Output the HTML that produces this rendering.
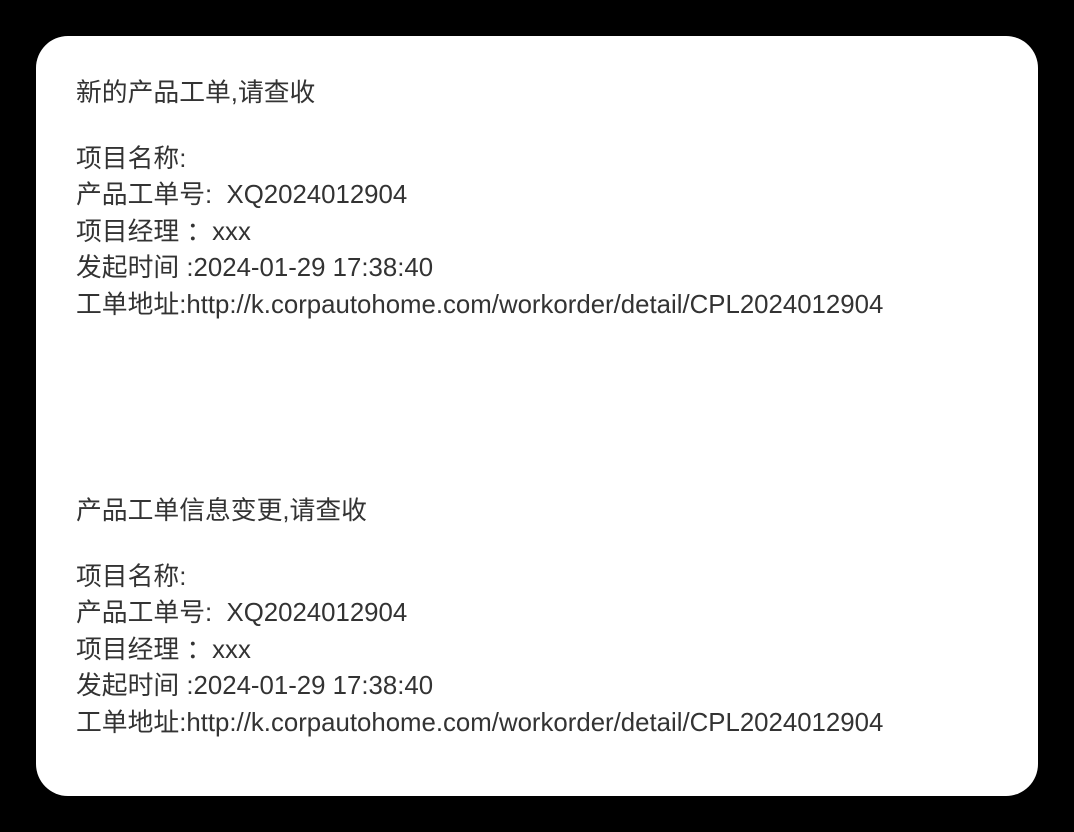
<!DOCTYPE html>
<html><head><meta charset="utf-8"><style>
html,body{margin:0;padding:0;background:#000;width:1074px;height:832px;overflow:hidden}
.card{position:absolute;left:36px;top:36px;width:1002px;height:760px;background:#fff;border-radius:32px}
.t{position:absolute;left:76px;font-family:"Liberation Sans","Noto Sans CJK SC",sans-serif;font-size:25.8px;color:#333;line-height:36.4px;white-space:pre}
</style></head><body>
<div class="card"></div>
<div class="t" style="top:75px">新的产品工单,请查收</div>
<div class="t" style="top:141px">项目名称:
产品工单号:  XQ2024012904
项目经理 ：xxx
发起时间 :2024-01-29 17:38:40
工单地址:http://k.corpautohome.com/workorder/detail/CPL2024012904</div>
<div class="t" style="top:493px">产品工单信息变更,请查收</div>
<div class="t" style="top:559px">项目名称:
产品工单号:  XQ2024012904
项目经理 ：xxx
发起时间 :2024-01-29 17:38:40
工单地址:http://k.corpautohome.com/workorder/detail/CPL2024012904</div>
</body></html>
